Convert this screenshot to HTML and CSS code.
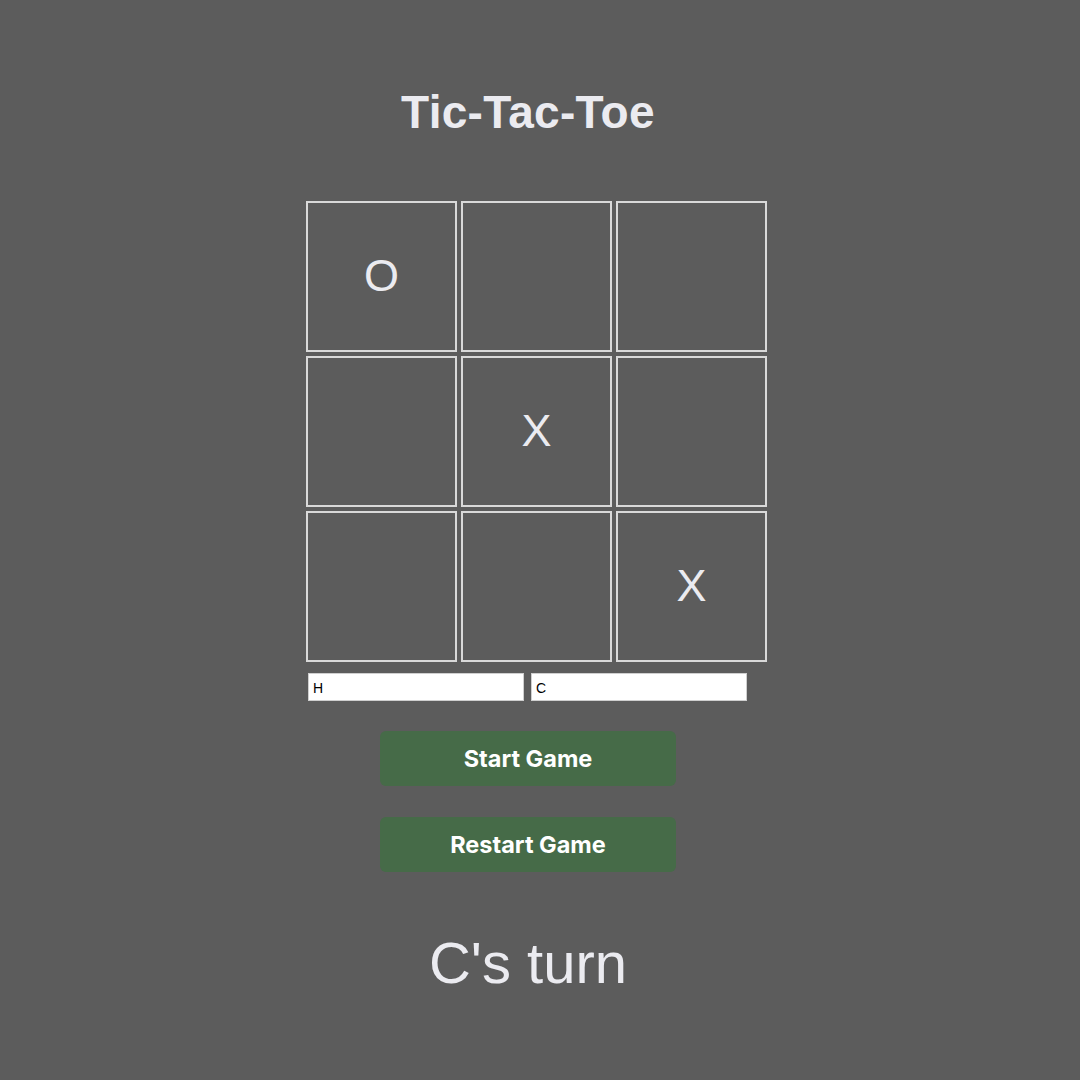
FILE: index.html
```html
<!DOCTYPE html>
<html lang="en">
<head>
<meta charset="utf-8">
<title>Tic-Tac-Toe</title>
<link rel="stylesheet" href="styles.css">
</head>
<body>
<main class="page">
  <h1 class="title">Tic-Tac-Toe</h1>
  <div class="game">
    <div class="board">
      <div class="cell">O</div>
      <div class="cell"></div>
      <div class="cell"></div>
      <div class="cell"></div>
      <div class="cell">X</div>
      <div class="cell"></div>
      <div class="cell"></div>
      <div class="cell"></div>
      <div class="cell">X</div>
    </div>
    <div class="players">
      <input class="player" type="text" value="H">
      <input class="player" type="text" value="C">
    </div>
  </div>
  <button class="btn btn-start">Start Game</button>
  <button class="btn btn-restart">Restart Game</button>
  <p class="status">C's turn</p>
</main>
</body>
</html>
```
FILE: styles.css
```css
html, body {
  margin: 0;
  padding: 0;
  background: #5c5c5c;
}
body {
  width: 1080px;
  height: 1080px;
  overflow: hidden;
}
.page {
  width: 1056px;
  display: flex;
  flex-direction: column;
  align-items: center;
  font-family: "Liberation Sans", Arial, sans-serif;
  color: #ebebf0;
}
.title {
  margin: 86px 0 0;
  font-size: 46px;
  line-height: 52px;
  font-weight: 700;
  letter-spacing: 0.3px;
}
.game {
  width: 440px;
  margin-top: 63px;
}
.board {
  display: grid;
  grid-template-columns: repeat(3, 151px);
  grid-auto-rows: 151px;
  gap: 4px;
  margin-left: -2px;
  width: 461px;
}
.cell {
  box-sizing: border-box;
  border: 2px solid #d9d9d9;
  display: flex;
  align-items: center;
  justify-content: center;
  font-size: 45px;
  color: #ebebf0;
  padding-bottom: 2px;
}
.players {
  display: flex;
  gap: 7px;
  margin-top: 11px;
}
.player {
  box-sizing: border-box;
  width: 216px;
  height: 28px;
  margin: 0;
  padding: 2px 4px 0;
  border: 1px solid #cfcfcf;
  background: #fff;
  font-family: "Liberation Sans", Arial, sans-serif;
  font-size: 14px;
  color: #000;
  outline: none;
}
.btn {
  width: 296px;
  height: 55px;
  border: none;
  border-radius: 6px;
  background: #466b48;
  color: #ffffff;
  font-family: Inter, "Liberation Sans", sans-serif;
  font-weight: 700;
  font-size: 23.5px;
  padding: 0;
}
.btn-start {
  margin-top: 30px;
}
.btn-restart {
  margin-top: 31px;
}
.status {
  margin: 57px 0 0;
  font-size: 58px;
  line-height: 67px;
}
```
